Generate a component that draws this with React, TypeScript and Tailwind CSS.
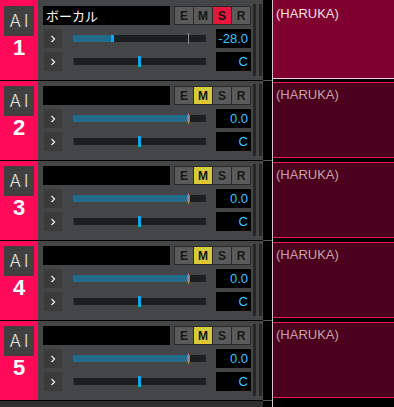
import React from "react";

type Track = {
  n: number;
  name: string;
  vol: string;
  fill: number;
  mute: boolean;
  solo: boolean;
  selected: boolean;
};

const tracks: Track[] = [
  { n: 1, name: "ボーカル", vol: "-28.0", fill: 38, mute: false, solo: true, selected: true },
  { n: 2, name: "", vol: "0.0", fill: 114, mute: true, solo: false, selected: false },
  { n: 3, name: "", vol: "0.0", fill: 114, mute: true, solo: false, selected: false },
  { n: 4, name: "", vol: "0.0", fill: 114, mute: true, solo: false, selected: false },
  { n: 5, name: "", vol: "0.0", fill: 114, mute: true, solo: false, selected: false },
];

const sans = { fontFamily: '"Liberation Sans", Arial, sans-serif' };

// row separator, each column has its own colour
function Sep({ first }: { first?: boolean }) {
  return (
    <div className="flex h-px">
      <div className={first ? "w-[38px] bg-[#ff0a59]" : "w-[38px] bg-black"} />
      <div className={first ? "w-[225px] bg-[#444546]" : "w-[225px] bg-black"} />
      <div className={first ? "w-[9px] bg-black" : "w-[9px] bg-[#5c5c5c]"} />
      <div className="w-px bg-[#dcc4cb]" />
      <div className={first ? "flex-1 bg-[#7f002f]" : "flex-1 bg-black"} />
    </div>
  );
}

function Chevron() {
  return (
    <div className="ml-px flex h-[19px] w-[18px] items-center justify-center bg-[#3b3b3b]">
      <svg width="6" height="8" viewBox="0 0 6 8" fill="none">
        <path d="M1.5 1 L4.5 4 L1.5 7" stroke="#e8e8e8" strokeWidth="1.3" />
      </svg>
    </div>
  );
}

function VolumeFader({ fill }: { fill: number }) {
  return (
    <div className="relative ml-[11px] h-[7px] w-[133px] bg-[#1b1f22]">
      <div className="absolute left-0 top-0 h-full bg-[#236b8a]" style={{ width: fill }} />
      <div className="absolute top-0 h-full w-[3px] bg-[#0ba6ee]" style={{ left: fill }} />
      <div className="absolute left-[115px] top-[-2px] h-[11px] w-px bg-[#8c8c8c]" />
    </div>
  );
}

function PanFader() {
  return (
    <div className="relative ml-[11px] h-[7px] w-[133px] bg-[#1b1f22]">
      <div className="absolute left-0 top-0 h-full w-px bg-[#363a3d]" />
      <div className="absolute left-[65px] top-[-2px] h-[11px] w-[3px] bg-[#0ba6ee]" />
    </div>
  );
}

function ValueBox({ text }: { text: string }) {
  return (
    <div
      className="ml-[10px] h-[19px] w-[35px] bg-black pr-[3px] text-right text-[13px] leading-[19px] text-[#3cc4ff]"
      style={sans}
    >
      {text}
    </div>
  );
}

function Buttons({ mute, solo }: { mute: boolean; solo: boolean }) {
  const base = "flex h-[17px] w-[18px] items-center justify-center text-[12px] font-bold leading-none";
  return (
    <div className="flex gap-px bg-[#2a2a2a] p-px" style={sans}>
      <div className={`${base} bg-[#5b5b5b] text-[#161616]`}>E</div>
      <div className={mute ? `${base} bg-[#d8c83e] text-[#111]` : `${base} bg-[#5b5b5b] text-[#161616]`}>M</div>
      <div className={solo ? `${base} bg-[#e8163c] text-[#111]` : `${base} bg-[#5b5b5b] text-[#161616]`}>S</div>
      <div className={`${base} bg-[#5b5b5b] text-[#161616]`}>R</div>
    </div>
  );
}

function Row({ t }: { t: Track }) {
  return (
    <div className="flex h-[79px]">
      <div className="flex w-[38px] flex-col items-center bg-[#ff0a59] pt-[5px]">
        <div
          className="flex h-[30px] w-[30px] items-center justify-center bg-[#404040] pl-[3px] text-[17px] font-light leading-none tracking-[3px] text-[#e4e4e4]"
          style={{ fontFamily: 'Inter, "Open Sans", sans-serif' }}
        >
          AI
        </div>
        <div className="mt-px text-[22px] font-bold leading-none text-white" style={sans}>
          {t.n}
        </div>
      </div>

      <div className="flex w-[225px] bg-[#444546]">
        <div className="flex w-[213px] flex-col gap-[4px] pl-[5px] pt-[5px]">
          <div className="flex h-[19px] gap-[4px]">
            <div
              className="h-[19px] w-[127px] bg-black pl-[3px] text-[13px] leading-[19px] text-white"
              style={{ fontFamily: '"Noto Sans CJK JP", "Liberation Sans", sans-serif' }}
            >
              {t.name}
            </div>
            <Buttons mute={t.mute} solo={t.solo} />
          </div>
          <div className="flex h-[19px] items-center">
            <Chevron />
            <VolumeFader fill={t.fill} />
            <ValueBox text={t.vol} />
          </div>
          <div className="flex h-[19px] items-center">
            <Chevron />
            <PanFader />
            <ValueBox text="C" />
          </div>
        </div>
        {/* level meter */}
        <div className="flex w-[12px] gap-[3px] pl-[2px] pt-[3px]">
          <div className="h-[72px] w-[3px] bg-[#262626]" />
          <div className="h-[72px] w-[3px] bg-[#262626]" />
        </div>
      </div>

      <div className="w-[9px] bg-black" />
      <div className="w-px bg-[#dcc4cb]" />

      <div className="flex-1 bg-black">
        {t.selected ? (
          <div
            className="h-[78px] border-b border-[#e6d4da] bg-[#7f002f] pl-[3px] pt-[5px] text-[13px] leading-[15px] text-[#f3dfe6]"
            style={sans}
          >
            (HARUKA)
          </div>
        ) : (
          <div
            className="mt-px h-[76px] border-y border-[#f0164f] bg-[#4b001d] pl-[3px] pt-[4px] text-[13px] leading-[15px] text-[#c9a3ae]"
            style={sans}
          >
            (HARUKA)
          </div>
        )}
      </div>
    </div>
  );
}

export default function App() {
  return (
    <div className="flex h-[407px] w-[394px] flex-col overflow-hidden bg-black">
      {tracks.map((t, i) => (
        <div key={t.n} className="flex flex-col">
          <Sep first={i === 0} />
          <Row t={t} />
        </div>
      ))}
      <Sep />
      <div className="flex h-[6px]">
        <div className="w-[263px] bg-[#2e2e2e]" />
        <div className="w-[9px] bg-black" />
        <div className="w-px bg-[#dcc4cb]" />
        <div className="flex-1 bg-black" />
      </div>
    </div>
  );
}
